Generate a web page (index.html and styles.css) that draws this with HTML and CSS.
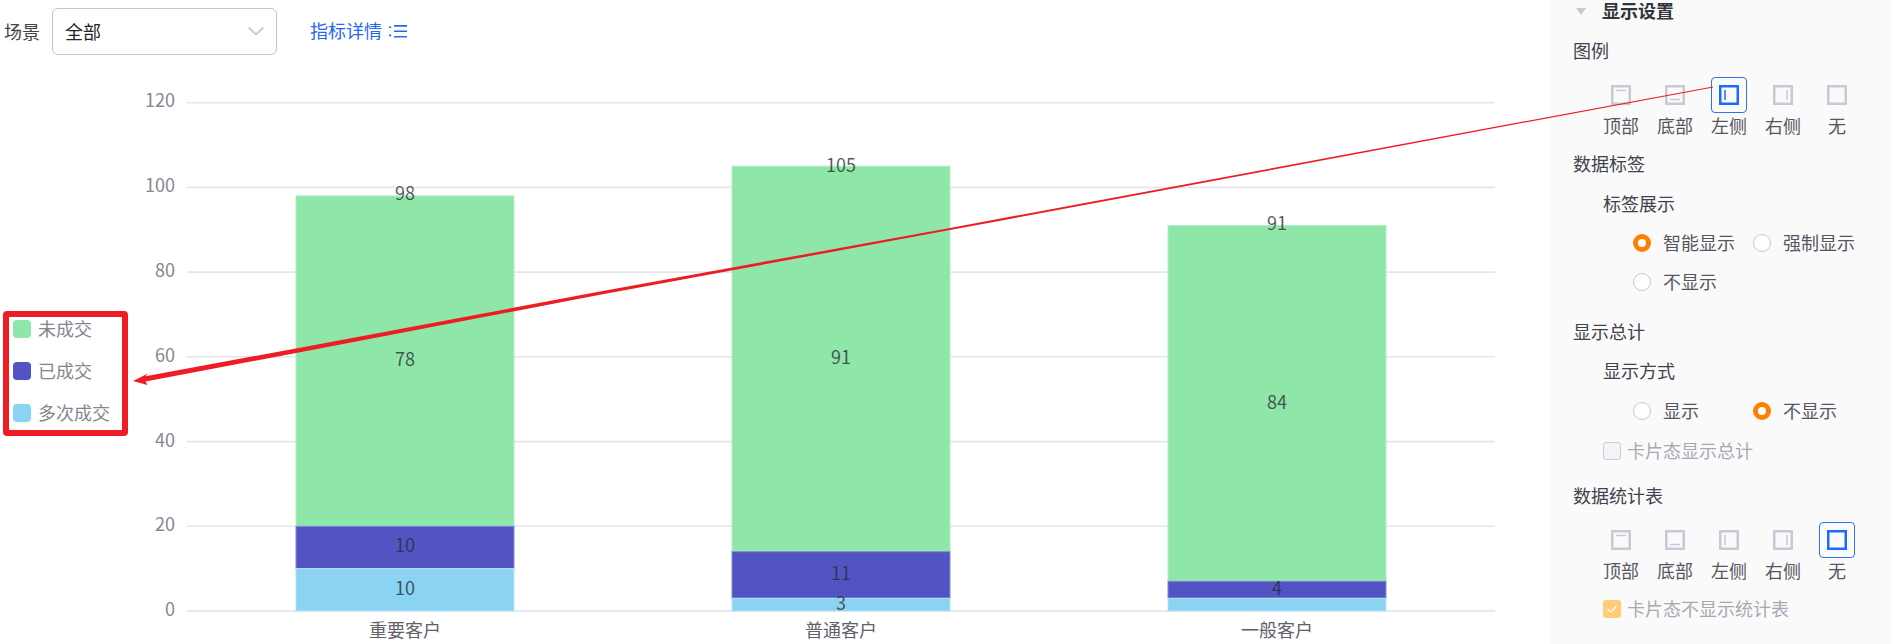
FILE: index.html
```html
<!DOCTYPE html>
<html lang="zh-CN">
<head>
<meta charset="utf-8">
<title>图表设置</title>
<link rel="stylesheet" href="styles.css">
</head>
<body>
<div class="app">
  <main class="main">
    <div class="toolbar">
      <span class="scene-label">场景</span>
      <div class="select">
        <span class="select-value">全部</span>
        <svg class="chevron" viewBox="0 0 16 8" width="16" height="8"><path d="M0.7 0.7 8 7.3 15.3 0.7"/></svg>
      </div>
      <a class="detail-link">指标详情
        <svg class="list-icon" viewBox="0 0 18 13" width="18" height="13"><path d="M0 2.2h2.2M0 10.4h2.2M5 .9h13M5 6.2h13M5 11.7h13"/></svg>
      </a>
    </div>
    <div class="chart">
      <div class="legend">
        <div class="legend-item"><i class="swatch swatch-green"></i><span class="legend-text">未成交</span></div>
        <div class="legend-item"><i class="swatch swatch-indigo"></i><span class="legend-text">已成交</span></div>
        <div class="legend-item"><i class="swatch swatch-blue"></i><span class="legend-text">多次成交</span></div>
      </div>
      <svg class="plot" viewBox="130 64 1419 580" width="1419" height="580">
        <g class="grid">
          <line x1="187" x2="1495" y1="102.7" y2="102.7"/>
          <line x1="187" x2="1495" y1="187.4" y2="187.4"/>
          <line x1="187" x2="1495" y1="272.1" y2="272.1"/>
          <line x1="187" x2="1495" y1="356.8" y2="356.8"/>
          <line x1="187" x2="1495" y1="441.6" y2="441.6"/>
          <line x1="187" x2="1495" y1="526.3" y2="526.3"/>
          <line class="baseline" x1="187" x2="1495" y1="611" y2="611"/>
        </g>
        <g class="y-axis">
          <text x="175" y="99">120</text>
          <text x="175" y="184">100</text>
          <text x="175" y="269">80</text>
          <text x="175" y="353.5">60</text>
          <text x="175" y="438.5">40</text>
          <text x="175" y="523">20</text>
          <text x="175" y="608">0</text>
        </g>
        <g class="bars">
          <rect class="bar-green" x="296" y="195.9" width="218" height="330.4"/>
          <rect class="bar-indigo" x="296" y="526.3" width="218" height="42.3"/>
          <rect class="bar-blue" x="296" y="568.6" width="218" height="42.4"/>
          <rect class="bar-green" x="732" y="166.2" width="218" height="385.5"/>
          <rect class="bar-indigo" x="732" y="551.7" width="218" height="46.6"/>
          <rect class="bar-blue" x="732" y="598.3" width="218" height="12.7"/>
          <rect class="bar-green" x="1168" y="225.5" width="218" height="355.8"/>
          <rect class="bar-indigo" x="1168" y="581.3" width="218" height="17"/>
          <rect class="bar-blue" x="1168" y="598.3" width="218" height="12.7"/>
        </g>
        <g class="values">
          <text x="405" y="192">98</text>
          <text x="405" y="357.5">78</text>
          <text x="405" y="544">10</text>
          <text x="405" y="587">10</text>
          <text x="841" y="164">105</text>
          <text x="841" y="355.5">91</text>
          <text x="841" y="571.7">11</text>
          <text x="841" y="601.5">3</text>
          <text x="1277" y="222.3">91</text>
          <text x="1277" y="400.5">84</text>
          <text x="1277" y="587">4</text>
        </g>
        <g class="x-axis">
          <text x="405" y="629">重要客户</text>
          <text x="841" y="629">普通客户</text>
          <text x="1277" y="629">一般客户</text>
        </g>
      </svg>
    </div>
  </main>

  <aside class="panel">
    <div class="panel-title"><i class="caret"></i>显示设置</div>
    <div class="row mt-17">图例</div>
    <div class="pos-grid mt-14">
      <div class="pos"><span class="pos-box"><svg class="lay" viewBox="0 0 20 20"><rect x="1.25" y="1.25" width="17.5" height="17.5"/><path d="M5 5.5h10"/></svg></span>顶部</div>
      <div class="pos"><span class="pos-box"><svg class="lay" viewBox="0 0 20 20"><rect x="1.25" y="1.25" width="17.5" height="17.5"/><path d="M5 14.5h10"/></svg></span>底部</div>
      <div class="pos"><span class="pos-box pos-on"><svg class="lay" viewBox="0 0 20 20"><rect x="1.25" y="1.25" width="17.5" height="17.5"/><path d="M6 5v10"/></svg></span>左侧</div>
      <div class="pos"><span class="pos-box"><svg class="lay" viewBox="0 0 20 20"><rect x="1.25" y="1.25" width="17.5" height="17.5"/><path d="M14 5v10"/></svg></span>右侧</div>
      <div class="pos"><span class="pos-box"><svg class="lay" viewBox="0 0 20 20"><rect x="1.25" y="1.25" width="17.5" height="17.5"/></svg></span>无</div>
    </div>
    <div class="row mt-14">数据标签</div>
    <div class="row sub mt-16">标签展示</div>
    <div class="radios mt-15">
      <label class="radio"><i class="dot dot-on"></i>智能显示</label>
      <label class="radio"><i class="dot"></i>强制显示</label>
    </div>
    <div class="radios mt-15">
      <label class="radio"><i class="dot"></i>不显示</label>
    </div>
    <div class="row mt-26">显示总计</div>
    <div class="row sub mt-15">显示方式</div>
    <div class="radios mt-16">
      <label class="radio"><i class="dot"></i>显示</label>
      <label class="radio"><i class="dot dot-on"></i>不显示</label>
    </div>
    <label class="check mt-16"><i class="box"></i>卡片态显示总计</label>
    <div class="row mt-21">数据统计表</div>
    <div class="pos-grid mt-14">
      <div class="pos"><span class="pos-box"><svg class="lay" viewBox="0 0 20 20"><rect x="1.25" y="1.25" width="17.5" height="17.5"/><path d="M5 5.5h10"/></svg></span>顶部</div>
      <div class="pos"><span class="pos-box"><svg class="lay" viewBox="0 0 20 20"><rect x="1.25" y="1.25" width="17.5" height="17.5"/><path d="M5 14.5h10"/></svg></span>底部</div>
      <div class="pos"><span class="pos-box"><svg class="lay" viewBox="0 0 20 20"><rect x="1.25" y="1.25" width="17.5" height="17.5"/><path d="M6 5v10"/></svg></span>左侧</div>
      <div class="pos"><span class="pos-box"><svg class="lay" viewBox="0 0 20 20"><rect x="1.25" y="1.25" width="17.5" height="17.5"/><path d="M14 5v10"/></svg></span>右侧</div>
      <div class="pos"><span class="pos-box pos-on"><svg class="lay" viewBox="0 0 20 20"><rect x="1.25" y="1.25" width="17.5" height="17.5"/></svg></span>无</div>
    </div>
    <label class="check mt-14"><i class="box box-on"><svg viewBox="0 0 18 18" width="18" height="18"><path d="M4.5 9.2 8 12.2 13.5 6"/></svg></i>卡片态不显示统计表</label>
  </aside>

  <svg class="annotation" viewBox="0 0 1892 644" width="1892" height="644">
    <rect class="anno-box" x="6" y="314" width="119" height="119" rx="1"/>
    <path class="anno-arrow" d="M1713 86.4 950 227.9 600 291.6 300 347.7 145.5 376.2 148 373.5 133 381 147.5 385 145.5 381.4 300 352.3 600 294.8 950 230.1 1713 87.4Z"/>
  </svg>
</div>
</body>
</html>
```

FILE: styles.css
```css
* { box-sizing: border-box; }
html, body { margin: 0; padding: 0; background: #fff; }
body {
  font-family: "Noto Sans CJK SC", "Noto Sans", sans-serif;
  font-size: 18px;
  color: #41434c;
}
.app { position: relative; display: flex; width: 1892px; height: 644px; overflow: hidden; }

/* main */
.main { width: 1549px; flex: none; }
.toolbar { display: flex; align-items: center; height: 64px; padding: 0 0 0 4px; }
.scene-label { width: 48px; margin-top: -3px; line-height: 24px; }
.select {
  display: flex; align-items: center; justify-content: space-between;
  width: 225px; height: 47px; margin-top: -1px; padding: 0 12px 0 12px;
  border: 1px solid #c3c6d1; border-radius: 6px; color: #22232a;
}
.select-value { margin-top: -2px; line-height: 24px; }
.chevron { fill: none; stroke: #c0c4d0; stroke-width: 1.6; margin-top: -1px; }
.detail-link { display: flex; align-items: center; gap: 7px; margin-left: 33px; margin-top: -4px; color: #2468f2; line-height: 24px; }
.list-icon { fill: none; stroke: #2468f2; stroke-width: 1.6; margin-top: 2px; }

.chart { display: flex; height: 580px; }
.legend { width: 130px; flex: none; margin-top: 251px; padding-left: 13px; display: flex; flex-direction: column; gap: 14px; }
.legend-item { display: flex; align-items: center; gap: 7px; height: 28px; color: #84868f; white-space: nowrap; }
.legend-text { margin-top: -2px; line-height: 24px; }
.swatch { display: block; width: 18px; height: 18px; border-radius: 4px; flex: none; }
.swatch-green { background: #8ee6a8; }
.swatch-indigo { background: #5254c4; }
.swatch-blue { background: #8ad3f2; }

.plot { display: block; flex: none; }
.grid line { stroke: #e5e6ea; stroke-width: 1.6; }
.grid .baseline { stroke: #dfe1ea; }
.y-axis text { font-size: 18px; fill: #85878f; text-anchor: end; dominant-baseline: central; }
.x-axis text { font-size: 18px; fill: #5f6068; text-anchor: middle; dominant-baseline: central; }
.values text { font-size: 18px; fill: #2b2c35; fill-opacity: .78; text-anchor: middle; dominant-baseline: central; }
.bar-green { fill: #8ee6a8; stroke: #b4eec6; stroke-width: 1; }
.bar-indigo { fill: #5254c4; stroke: #8384d8; stroke-width: 1; }
.bar-blue { fill: #8ad3f2; stroke: #b8e4f7; stroke-width: 1; }

/* panel */
.panel { flex: 1; height: 644px; padding-left: 24px; background: #fafafb; }
.panel-title { display: flex; align-items: flex-start; gap: 16px; height: 22px; line-height: 20px; font-weight: 700; color: #33353d; margin-left: 3px; }
.caret { display: block; width: 0; height: 0; margin-top: 8px; border-left: 5.5px solid transparent; border-right: 5.5px solid transparent; border-top: 7px solid #c5c8d2; }
.row { height: 24px; line-height: 22px; }
.sub { padding-left: 30px; }
.mt-14 { margin-top: 14px; }
.mt-15 { margin-top: 15px; }
.mt-16 { margin-top: 16px; }
.mt-17 { margin-top: 17px; }
.mt-21 { margin-top: 21px; }
.mt-26 { margin-top: 26px; }

.pos-grid { display: flex; gap: 18px; padding-left: 30px; }
.pos { display: flex; flex-direction: column; align-items: center; gap: 1px; width: 36px; height: 61px; line-height: 22px; white-space: nowrap; color: #55575f; }
.pos-box { display: flex; align-items: center; justify-content: center; width: 36px; height: 36px; border: 1px solid transparent; border-radius: 4px; }
.lay { display: block; width: 20px; height: 20px; fill: none; stroke: #c7cad5; stroke-width: 2.5; }
.lay path { stroke-width: 1.5; }
.pos-on { border-color: #2b72f6; }
.pos-on .lay { stroke: #1a6cff; }

.radios { display: grid; grid-template-columns: 120px 120px; height: 24px; padding-left: 60px; }
.radio { display: flex; align-items: flex-start; gap: 12px; white-space: nowrap; line-height: 22px; color: #55575f; }
.dot { display: block; width: 18px; height: 18px; margin-top: 3px; border: 1px solid #c5c8d2; border-radius: 50%; background: #fff; flex: none; }
.dot-on { border: 5px solid #ff8000; }

.check { display: flex; align-items: flex-start; gap: 6px; height: 24px; padding-left: 30px; line-height: 22px; color: #a6a9b3; white-space: nowrap; }
.box { display: block; width: 18px; height: 18px; margin-top: 3px; border: 1px solid #c9ccd6; border-radius: 3px; background: #f3f4f7; flex: none; }
.box-on { border: 0; background: #ffcc7a; }
.box-on svg { display: block; fill: none; stroke: #fff; stroke-width: 1.3; }

/* annotation overlay */
.annotation { position: absolute; left: 0; top: 0; pointer-events: none; }
.anno-box { fill: none; stroke: #ee1c25; stroke-width: 6; }
.anno-arrow { fill: #ee1c25; }
```
